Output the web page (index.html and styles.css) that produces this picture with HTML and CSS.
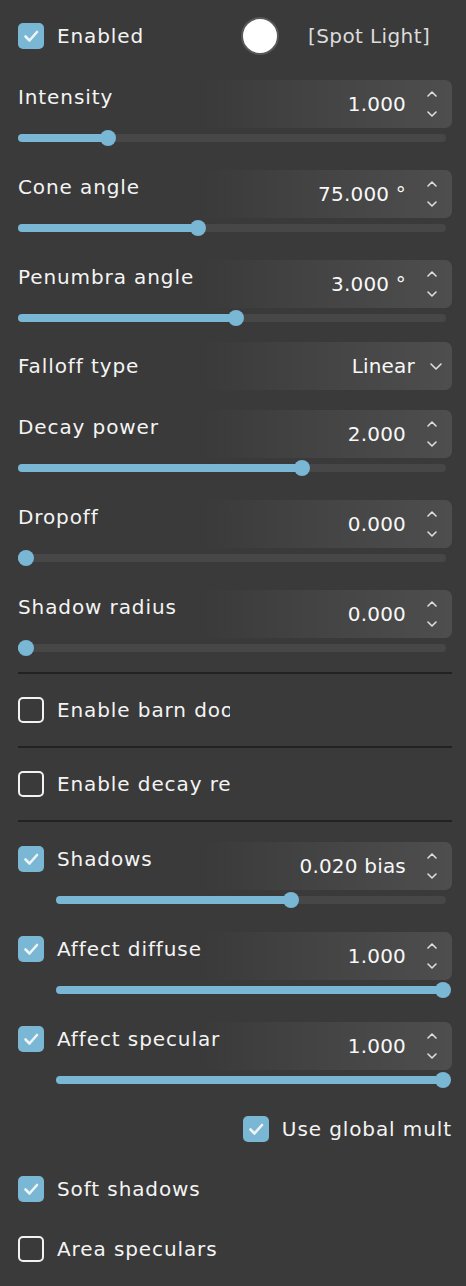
FILE: index.html
```html
<!DOCTYPE html>
<html>
<head>
<meta charset="utf-8">
<link rel="stylesheet" href="styles.css">
</head>
<body>
<div class="panel">
  <div class="top">
    <div class="check top-check">
      <span class="cb on"><svg viewBox="0 0 26 26" width="26" height="26"><path d="M7.5 13.5 L11.5 17.5 L19 9" class="tick"/></svg></span>
      <span class="txt">Enabled</span>
    </div>
    <span class="swatch"></span>
    <span class="type">[Spot Light]</span>
  </div>

  <div class="field">
    <div class="row">
      <span class="lbl">Intensity</span>
      <div class="num"><span class="val">1.000</span><span class="spin"><svg viewBox="0 0 10 6" width="10" height="6"><polyline points="1,5 5,1 9,5"/></svg><svg viewBox="0 0 10 6" width="10" height="6"><polyline points="1,1 5,5 9,1"/></svg></span></div>
    </div>
    <div class="track"><div class="fill" style="width:21%"></div></div>
  </div>

  <div class="field">
    <div class="row">
      <span class="lbl">Cone angle</span>
      <div class="num"><span class="val">75.000 °</span><span class="spin"><svg viewBox="0 0 10 6" width="10" height="6"><polyline points="1,5 5,1 9,5"/></svg><svg viewBox="0 0 10 6" width="10" height="6"><polyline points="1,1 5,5 9,1"/></svg></span></div>
    </div>
    <div class="track"><div class="fill" style="width:42.1%"></div></div>
  </div>

  <div class="field">
    <div class="row">
      <span class="lbl">Penumbra angle</span>
      <div class="num"><span class="val">3.000 °</span><span class="spin"><svg viewBox="0 0 10 6" width="10" height="6"><polyline points="1,5 5,1 9,5"/></svg><svg viewBox="0 0 10 6" width="10" height="6"><polyline points="1,1 5,5 9,1"/></svg></span></div>
    </div>
    <div class="track"><div class="fill" style="width:50.9%"></div></div>
  </div>

  <div class="field select-field">
    <div class="row">
      <span class="lbl sel-lbl">Falloff type</span>
      <div class="num sel"><span class="val">Linear</span><svg class="caret" viewBox="0 0 12 7" width="12" height="7"><polyline points="1,1 6,6 11,1"/></svg></div>
    </div>
  </div>

  <div class="field">
    <div class="row">
      <span class="lbl">Decay power</span>
      <div class="num"><span class="val">2.000</span><span class="spin"><svg viewBox="0 0 10 6" width="10" height="6"><polyline points="1,5 5,1 9,5"/></svg><svg viewBox="0 0 10 6" width="10" height="6"><polyline points="1,1 5,5 9,1"/></svg></span></div>
    </div>
    <div class="track"><div class="fill" style="width:66.4%"></div></div>
  </div>

  <div class="field">
    <div class="row">
      <span class="lbl">Dropoff</span>
      <div class="num"><span class="val">0.000</span><span class="spin"><svg viewBox="0 0 10 6" width="10" height="6"><polyline points="1,5 5,1 9,5"/></svg><svg viewBox="0 0 10 6" width="10" height="6"><polyline points="1,1 5,5 9,1"/></svg></span></div>
    </div>
    <div class="track"><div class="fill" style="width:1.9%"></div></div>
  </div>

  <div class="field">
    <div class="row">
      <span class="lbl">Shadow radius</span>
      <div class="num"><span class="val">0.000</span><span class="spin"><svg viewBox="0 0 10 6" width="10" height="6"><polyline points="1,5 5,1 9,5"/></svg><svg viewBox="0 0 10 6" width="10" height="6"><polyline points="1,1 5,5 9,1"/></svg></span></div>
    </div>
    <div class="track"><div class="fill" style="width:1.9%"></div></div>
  </div>

  <div class="divider first"></div>
  <div class="crow">
    <div class="check">
      <span class="cb off"></span>
      <span class="txt clip">Enable barn doors</span>
    </div>
  </div>
  <div class="divider"></div>
  <div class="crow">
    <div class="check">
      <span class="cb off"></span>
      <span class="txt clip">Enable decay regions</span>
    </div>
  </div>
  <div class="divider"></div>

  <div class="field after-div">
    <div class="row">
      <div class="check lbl-check">
        <span class="cb on"><svg viewBox="0 0 26 26" width="26" height="26"><path d="M7.5 13.5 L11.5 17.5 L19 9" class="tick"/></svg></span>
        <span class="txt">Shadows</span>
      </div>
      <div class="num"><span class="val">0.020 bias</span><span class="spin"><svg viewBox="0 0 10 6" width="10" height="6"><polyline points="1,5 5,1 9,5"/></svg><svg viewBox="0 0 10 6" width="10" height="6"><polyline points="1,1 5,5 9,1"/></svg></span></div>
    </div>
    <div class="track indent"><div class="fill" style="width:60.3%"></div></div>
  </div>

  <div class="field">
    <div class="row">
      <div class="check lbl-check">
        <span class="cb on"><svg viewBox="0 0 26 26" width="26" height="26"><path d="M7.5 13.5 L11.5 17.5 L19 9" class="tick"/></svg></span>
        <span class="txt">Affect diffuse</span>
      </div>
      <div class="num"><span class="val">1.000</span><span class="spin"><svg viewBox="0 0 10 6" width="10" height="6"><polyline points="1,5 5,1 9,5"/></svg><svg viewBox="0 0 10 6" width="10" height="6"><polyline points="1,1 5,5 9,1"/></svg></span></div>
    </div>
    <div class="track indent"><div class="fill" style="width:99.2%"></div></div>
  </div>

  <div class="field">
    <div class="row">
      <div class="check lbl-check">
        <span class="cb on"><svg viewBox="0 0 26 26" width="26" height="26"><path d="M7.5 13.5 L11.5 17.5 L19 9" class="tick"/></svg></span>
        <span class="txt">Affect specular</span>
      </div>
      <div class="num"><span class="val">1.000</span><span class="spin"><svg viewBox="0 0 10 6" width="10" height="6"><polyline points="1,5 5,1 9,5"/></svg><svg viewBox="0 0 10 6" width="10" height="6"><polyline points="1,1 5,5 9,1"/></svg></span></div>
    </div>
    <div class="track indent"><div class="fill" style="width:99.2%"></div></div>
  </div>

  <div class="srow right first-srow">
    <div class="check">
      <span class="cb on"><svg viewBox="0 0 26 26" width="26" height="26"><path d="M7.5 13.5 L11.5 17.5 L19 9" class="tick"/></svg></span>
      <span class="txt">Use global mult</span>
    </div>
  </div>
  <div class="srow">
    <div class="check">
      <span class="cb on"><svg viewBox="0 0 26 26" width="26" height="26"><path d="M7.5 13.5 L11.5 17.5 L19 9" class="tick"/></svg></span>
      <span class="txt">Soft shadows</span>
    </div>
  </div>
  <div class="srow">
    <div class="check">
      <span class="cb off"></span>
      <span class="txt">Area speculars</span>
    </div>
  </div>
</div>
</body>
</html>
```

FILE: styles.css
```css
html, body {
  margin: 0;
  padding: 0;
}
body {
  background: #3a3a3a;
  color: #f4f4f4;
  font-family: "DejaVu Sans", "Open Sans", sans-serif;
  font-size: 20px;
  letter-spacing: 0.9px;
  line-height: 1.3;
}
.panel {
  padding: 17px 14px 0 18px;
}
.top {
  display: flex;
  align-items: center;
  height: 38px;
}
.top-check {
  width: 223px;
}
.swatch {
  width: 34px;
  height: 34px;
  border-radius: 50%;
  background: #ffffff;
  border: 2px solid #585858;
  flex: none;
}
.type {
  margin-left: 29px;
  color: #dcdcdc;
  letter-spacing: 0.4px;
}
.check {
  display: flex;
  align-items: center;
  gap: 13px;
}
.cb {
  width: 26px;
  height: 26px;
  box-sizing: border-box;
  border-radius: 5px;
  flex: none;
  display: block;
}
.cb svg {
  display: block;
}
.cb.on {
  background: #79b7d4;
}
.cb.off {
  border: 2px solid #f2f2f2;
}
.tick {
  fill: none;
  stroke: #eef3f6;
  stroke-width: 2.6;
  stroke-linecap: round;
  stroke-linejoin: round;
}
.txt {
  white-space: nowrap;
}
.clip {
  width: 173px;
  overflow: hidden;
}
.field {
  margin-top: 28px;
}
.top + .field {
  margin-top: 25px;
}
.select-field {
  margin-top: 20px;
}
.select-field + .field {
  margin-top: 20px;
}
.after-div {
  margin-top: 20px;
}
.row {
  display: grid;
  grid-template-columns: 1fr 252px;
  height: 48px;
}
.lbl {
  grid-column: 1 / 3;
  grid-row: 1;
  align-self: start;
  line-height: 32px;
  padding-top: 1px;
  white-space: nowrap;
}
.sel-lbl {
  align-self: center;
  padding-top: 0;
}
.lbl-check {
  grid-column: 1 / 3;
  grid-row: 1;
  align-self: start;
  height: 34px;
}
.num {
  grid-column: 2;
  grid-row: 1;
  display: flex;
  align-items: center;
  justify-content: flex-end;
  border-radius: 7px;
  background: linear-gradient(90deg, rgba(255,255,255,0) 0%, rgba(255,255,255,0.045) 40%, rgba(255,255,255,0.1) 100%);
  padding-right: 15px;
}
.val {
  color: #f8f8f8;
  letter-spacing: 0.2px;
}
.spin {
  display: flex;
  flex-direction: column;
  gap: 14px;
  margin-left: 21px;
}
.spin svg, .caret {
  display: block;
  fill: none;
  stroke: #dedede;
  stroke-width: 1.6;
  stroke-linecap: round;
  stroke-linejoin: round;
}
.sel {
  padding-right: 10px;
}
.caret {
  margin-left: 15px;
}
.track {
  height: 8px;
  border-radius: 4px;
  background: #474747;
  margin: 6px 6px 0 0;
}
.track.indent {
  margin-left: 38px;
}
.fill {
  height: 100%;
  background: #79b7d4;
  border-radius: 4px;
  position: relative;
}
.fill::after {
  content: "";
  position: absolute;
  right: -8px;
  top: -4px;
  width: 16px;
  height: 16px;
  border-radius: 50%;
  background: #79b7d4;
}
.divider {
  height: 2px;
  background: #222222;
}
.divider.first {
  margin-top: 20px;
}
.crow {
  height: 72px;
  display: flex;
  align-items: center;
}
.srow {
  height: 40px;
  display: flex;
  align-items: center;
  margin-top: 20px;
}
.srow.first-srow {
  margin-top: 25px;
}
.srow.right {
  justify-content: flex-end;
}
```
